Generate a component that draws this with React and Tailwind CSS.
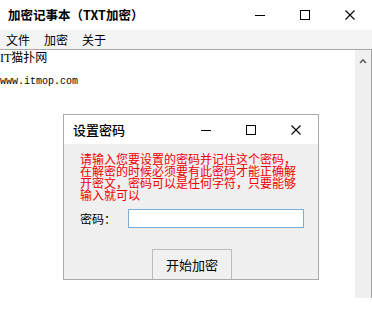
import React from 'react';

const cjk = { fontFamily: '"Noto Sans CJK SC", "Noto Sans", sans-serif' };

const MinIcon = () => (
    <svg width="10" height="10" viewBox="0 0 10 10" shapeRendering="crispEdges"><line x1="0" y1="5.5" x2="10" y2="5.5" stroke="#000" strokeWidth="1" /></svg>
);
const MaxIcon = () => (
    <svg width="10" height="10" viewBox="0 0 10 10" shapeRendering="crispEdges"><rect x="0.5" y="0.5" width="9" height="9" fill="none" stroke="#000" strokeWidth="1" /></svg>
);
const CloseIcon = () => (
    <svg width="10" height="10" viewBox="0 0 10 10"><path d="M0.5 0.5 L9.5 9.5 M9.5 0.5 L0.5 9.5" stroke="#000" strokeWidth="1.1" /></svg>
);

const Controls = () => (
    <div className="flex h-full">
        <div className="w-[45px] flex items-center justify-center"><MinIcon /></div>
        <div className="w-[45px] flex items-center justify-center"><MaxIcon /></div>
        <div className="w-[45px] flex items-center justify-center"><CloseIcon /></div>
    </div>
);

export default function App() {
    return (
        <div className="relative w-[372px] h-[310px] bg-white overflow-hidden text-black" style={cjk}>
            {/* title bar */}
            <div className="h-[30px] flex items-center">
                <span className="pl-[8px] text-[12.5px] font-bold leading-none">加密记事本（TXT加密）</span>
                <div className="ml-auto h-full"><Controls /></div>
            </div>
            {/* menu */}
            <div className="h-[20px] bg-[#f4f4f5] flex items-center text-[12px] border-b border-[#a8a8a8]">
                <span className="pl-[6px]">文件</span>
                <span className="pl-[14px]">加密</span>
                <span className="pl-[14px]">关于</span>
            </div>
            {/* editor */}
            <div className="h-[248px] flex border-r border-[#a0a0a0]">
                <div className="flex-1">
                    <div className="text-[12px] leading-[15px] pt-[1px]" style={{ fontFamily: '"Liberation Serif", "Noto Sans CJK SC", serif' }}>IT猫扑网</div>
                    <div className="text-[10px] leading-[12px] mt-[10px]" style={{ fontFamily: '"Liberation Mono", monospace' }}>www.itmop.com</div>
                </div>
                <div className="w-[16px] bg-[#f0f0f0] flex justify-center pt-[8px]">
                    <svg width="8" height="6" viewBox="0 0 8 6"><path d="M1 5 L4 2 L7 5" fill="none" stroke="#606060" strokeWidth="1.6" /></svg>
                </div>
            </div>

            {/* dialog */}
            <div className="absolute left-[63px] top-[114px] w-[256px] h-[166px] border border-[#aaaaaa] bg-[#f0f0f0] overflow-hidden">
                <div className="h-[29px] bg-white flex items-center">
                    <span className="pl-[9px] text-[13px] leading-none font-medium">设置密码</span>
                    <div className="ml-auto h-full"><Controls /></div>
                </div>
                <div className="pl-[16px]">
                    <p className="pt-[9px] w-[220px] text-[12px] leading-[12px] text-[#f00000]">请输入您要设置的密码并记住这个密码，在解密的时候必须要有此密码才能正确解开密文，密码可以是任何字符，只要能够输入就可以</p>
                    <div className="mt-[8px] flex items-center h-[19px]">
                        <span className="w-[48px] text-[12px]">密码：</span>
                        <div className="w-[176px] h-[19px] bg-white border border-[#7aaddc]"></div>
                    </div>
                    <div className="mt-[21px] ml-[72px] w-[80px] h-[32px] border border-[#bcbcbc] bg-[#f0f0f0] flex items-center justify-center text-[13px]">开始加密</div>
                </div>
            </div>
        </div>
    );
}
